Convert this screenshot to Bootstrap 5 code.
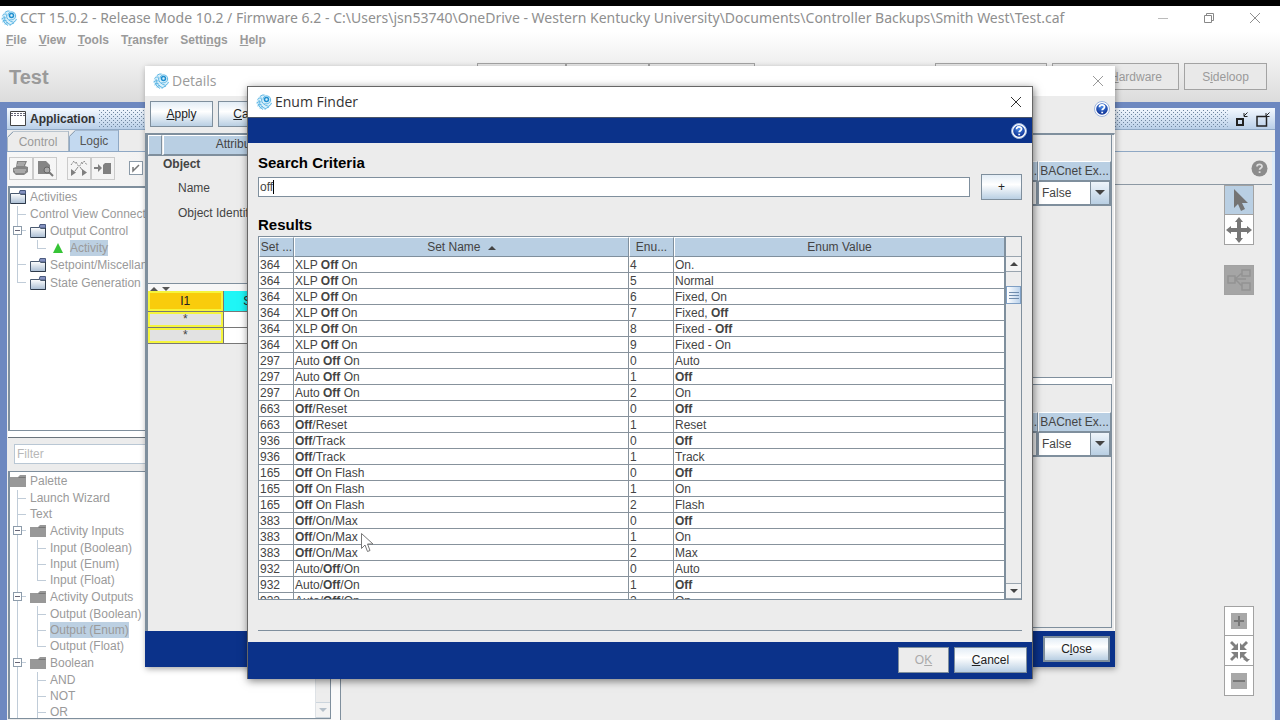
<!DOCTYPE html>
<html lang="en">
<head>
<meta charset="utf-8">
<meta name="viewport" content="width=device-width, initial-scale=1">
<title>CCT 15.0.2</title>
<link href="https://cdn.jsdelivr.net/npm/bootstrap@5.3.0/dist/css/bootstrap.min.css" rel="stylesheet">
<script src="https://cdn.jsdelivr.net/npm/bootstrap@5.3.0/dist/js/bootstrap.bundle.min.js"></script>
<style>
:root{--edge:#7f8f9d;--face:#ececec;--head:#b9cfe3;--navy:#0b328a;--dim:#9a9a9a}
body{font:12px/16px "Liberation Sans",Arial,sans-serif;color:#444;background:#ececec}
svg{display:block;flex:none}
button,input,select{font:inherit;color:inherit}
button{padding:0;border:0;background:none}
a{color:inherit;text-decoration:none}
ul{list-style:none;margin:0;padding:0}
.caption{font-family:"Open Sans","Noto Sans",sans-serif;font-size:14px;line-height:20px;white-space:nowrap}
.app-caption .caption{font-family:"Noto Sans","Open Sans",sans-serif}
.app{border-top:6px solid #000;color:var(--dim)}
.app-head{height:97px;background:linear-gradient(#fff 25px,#dcdcdc)}
.app-caption{height:24px;padding-left:1px;padding-right:19px;gap:3px;color:#8f8f8f}
.app-menu{height:20px;padding-left:6px;font-weight:bold}
.m-item{margin-right:12px}
.app-name{font-size:20px;line-height:24px;font-weight:bold}
.strip{padding:13px 13px 0 9px}
.strip-btns{gap:5px}
.view-set{margin-right:175px}
.flat-btn{border:1px solid #a3a3a3;height:27px;width:83px;background:#e9e9e9}
.desk{background:#6d88c0;padding:6px 5px 0 7px;min-height:0}
.frame{background:var(--face);min-height:0}
.frame-bar{height:22px;background:linear-gradient(#f4f9ff,#b9cfe8);border-bottom:1px solid #8fa8c4;padding:0 5px 0 3px;color:#333}
.tabs{height:22px;border-bottom:1px solid #8fa8c4}
.tab{height:20px;border:1px solid #a9b7c4;border-bottom:0;clip-path:polygon(6px 0,100% 0,100% 100%,0 100%,0 6px);background:linear-gradient(135deg,#fff 4px,#8fa2b5 4px 5px,#ececec 5px) border-box}
.tab.on{height:21px;color:#555;border-color:#8fa8c4;background:linear-gradient(135deg,#fff 4px,#8fa2b5 4px 5px,#c3d9f0 5px) border-box}
.side{width:333px;padding:0 9px 1px 1px;background:linear-gradient(90deg,var(--face) 324px,#fafafa 324px)}
.tool-row{height:34px;padding:0 0 2px 1px;background:linear-gradient(90deg,#f7f7f7,#ececec)}
.tool{width:24px;height:23px;border:1px solid #cbcbcb;display:grid;place-items:center}
.tick{appearance:none;width:14px;height:14px;border:1px solid #8b9aa8;background:#fff url("data:image/svg+xml,%3Csvg xmlns='http://www.w3.org/2000/svg' viewBox='0 0 12 12'%3E%3Cpath d='M3 5v4l6-6' fill='none' stroke='%23777' stroke-width='1.500'/%3E%3C/svg%3E");margin:0 0 0 14px}
.tree-box{background:#fff;border:1px solid var(--edge);border-width:2px 1px 1px 2px;white-space:nowrap;overflow:hidden}
.tree ul{margin-left:20px}
.tree ul>li{position:relative}
.tree ul>li::before{content:"";position:absolute;left:-13px;top:0;bottom:0;width:1px;background:#c0ccd8}
.tree ul>li:last-child::before{bottom:auto;height:8px}
.tree ul>li.more::before{bottom:0;height:auto}
.tree ul>li::after{content:"";position:absolute;left:-13px;top:8px;width:9px;height:1px;background:#c0ccd8}
.leaf{height:16px;display:flex;align-items:center;gap:4px}
.fold{height:18px;display:flex;align-items:center;gap:4px}
.twist{position:absolute;left:-17px;top:4px;width:9px;height:9px;border:1px solid #8d9cab;background:#fff;z-index:1}
.twist::after{content:"";display:block;width:5px;height:1px;margin:3px 1px;background:#667}
.picked{background:#bcd0e2}
.filter{height:20px;border:1px solid #b9c7d4;background:#fff;padding:0 2px}
.filter::placeholder{color:#b8b8b8;opacity:1}
.canvas-area{border-left:1px solid var(--edge)}
.canvas-bar{height:33px;border-bottom:1px solid #8c98a3;padding-right:4px}
.sq{width:30px;height:30px;border:1px solid #a2a2a2;background:#fff;display:grid;place-items:center}
.win{position:absolute;z-index:2;box-shadow:1px 2px 6px rgba(0,0,0,.35)}
.w-details{left:145px;right:165px;top:66px;height:601px;background:var(--face)}
.w-enum{left:247px;right:247px;top:86px;background:var(--face);border:1px solid #666;border-bottom:0;z-index:3;box-shadow:1px 2px 8px rgba(0,0,0,.5)}
.d-cap{height:30px;background:#fff;padding:0 11px 0 8px;gap:3px;color:var(--dim)}
.e-cap{height:31px;background:#fff;padding:0 10px 0 8px;gap:3px;color:#333;border-bottom:1px solid #4a5568}
.jbtn{height:26px;border:1px solid var(--edge);background:linear-gradient(#e3edf6,#fff 40%,#b9cfe3);color:#222}
.foot{background:var(--navy)}
.d-tools{height:37px;padding:5px 5px 0;gap:5px}
.d-body{border-top:2px solid var(--edge);border-left:3px solid var(--edge);border-right:1px solid #fff}
.hcell{height:20px;background:var(--head);border:1px solid;border-color:#fff var(--edge) var(--edge) #fff;text-align:center;white-space:nowrap;font-weight:normal;color:#444;overflow:hidden}
.cap-row{border-bottom:1px solid var(--edge)}
.attr{padding:0 0 0 15px;height:127px}
.attr-group{font-weight:bold;line-height:14px;padding-top:1px}
.attr-item{padding:9px 0 0 15px}
.split-bar{height:8px;background:#f7f7f7;border-top:1px solid var(--edge)}
.seq td{height:16px;padding:0;text-align:center;border:1px solid #777;border-width:0 1px 1px 0;line-height:14px}
.seq thead td{height:20px;line-height:18px;color:#222}
.seq .ylw{box-shadow:inset 0 0 0 2px #f5f53c;width:75px}
.opt-pane{border:1px solid var(--edge);border-left:0}
.ext{border-collapse:separate;border-spacing:0;width:100%;table-layout:fixed}
.ext th{padding:0;line-height:18px}
.ext td{padding:0;height:25px;border:2px solid var(--edge);border-width:1px 2px 2px 1px}
.ext th:last-child{width:73px}
.pick{appearance:none;border:0;border-radius:0;background:linear-gradient(90deg,var(--edge),var(--edge)) calc(100% - 18px) 0/1px 100% no-repeat,linear-gradient(#eef4fa,#b9cfe3) 100% 0/18px 100% no-repeat,#fff;height:22px;width:100%;padding:0 3px;display:block}
.arrow{position:absolute;right:4px;top:8px;pointer-events:none}
.e-blue{height:25px;padding-right:5px;background:var(--navy)}
.e-body{padding:10px 10px 0 10px;height:499px}
.e-label{font-size:15px;line-height:20px;font-weight:bold;color:#000}
.crit{height:20px;border:1px solid var(--edge);background:#fff;padding:0 1px;width:100%;display:block}
.caret{position:absolute;left:15px;top:3px;width:1px;height:14px;background:#000}
.grid-wrap{height:364px;border:1px solid var(--edge);overflow:hidden;margin-top:1px}
.grid-scroll{overflow:hidden;border-right:2px solid var(--edge);height:100%}
.res{width:100%;table-layout:fixed;border-collapse:separate;border-spacing:0;background:#fff;color:#444;white-space:nowrap}
.res td{height:16px;line-height:13px;padding:2px 1px 0;border:1px solid #87929c;border-width:0 1px 1px 0}
.res th{padding:1px 0 0;line-height:17px}
.res td:last-child,.res th:last-child{border-right:0}
.c1{width:35px}.c2{width:335px}.c3{width:45px}
.sbar{width:15px;flex:none;background:#ededed}
.sb-btn{height:16px;border:1px solid #9aa5af;border-width:1px 0;display:grid;place-items:center;width:100%;background:#f3f3f3}
.thumb{height:18px;border:1px solid #7f9fc4;background:linear-gradient(90deg,#fff,#bcd3ec);display:grid;place-items:center}
.e-foot{height:37px;padding:5px 5px 0;gap:5px}
.pointer{position:absolute;z-index:4;left:361px;top:533px}
</style>
</head>
<body class="overflow-hidden">
<svg width="0" height="0" class="position-absolute" aria-hidden="true">
<defs>
<linearGradient id="fg" x1="0" y1="0" x2="0" y2="1"><stop offset="0" stop-color="#fff"/><stop offset="1" stop-color="#a9bdd3"/></linearGradient>
<radialGradient id="hg" cx=".5" cy=".3" r=".7"><stop offset="0" stop-color="#4c8be8"/><stop offset="1" stop-color="#0a2c90"/></radialGradient>
<pattern id="dotty" width="4" height="4" patternUnits="userSpaceOnUse"><path d="M0 0h1v1H0zM2 2h1v1H2z" fill="#6f86a0"/></pattern>
<symbol id="logo" viewBox="0 0 16 16"><circle cx="8" cy="8" r="7.500" fill="#c9e9f8" opacity=".7"/><g fill="none" stroke="#62b8e6"><circle cx="10.500" cy="5.500" r="2" stroke="#1f8fd0" stroke-width="1.500"/><path d="M7 5.500C7 1 13.500 1 14.500 4.500 15.500 9 11 10.500 8.500 9.500M4 2.500Q6 .5 8.500 1M1.500 5.500Q3 3.500 5.500 4M.5 9q2-2 5-1M1.500 12q1-2 4-1.500M4 14.500q0-2 3-2M9 15.500q1-2 4-2.500M13 12q2-1 2.500-3M3 6q0 6 7 9M5.500 4.500q-.5 6 7.500 8M2 9.500q1 4 5 6"/></g></symbol>
<symbol id="folder" viewBox="0 0 16 14"><path d="M10 .5h5.500V4H9z" fill="#8592c0" stroke="#4a5a80"/><path d="M.5 3.500h9l1.500 1h4.500v9H.5z" fill="url(#fg)" stroke="#4a5a70"/><path d="M1 13.500h14.500V4" fill="none" stroke="#2e3a4a"/></symbol>
<symbol id="gfolder" viewBox="0 0 16 14"><path d="M0 3h8l2-2h6v12H0z" fill="#989898"/><path d="M8.500 3.500h7" stroke="#777"/></symbol>
<symbol id="help" viewBox="0 0 16 16"><circle cx="8" cy="8" r="7.500" fill="#fff" stroke="#9db4dc"/><circle cx="8" cy="8" r="5.800" fill="url(#hg)"/><path d="M5.500 6.200C5.500 3.200 10.700 3.300 10.500 6c-.1 1.700-2.300 1.700-2.300 3.300M8.200 10.700v1.600" fill="none" stroke="#fff" stroke-width="1.800"/></symbol>
<symbol id="x" viewBox="0 0 12 12"><path d="M1 1l10 10M11 1L1 11" stroke="currentColor" fill="none"/></symbol>
<symbol id="up" viewBox="0 0 8 4"><path d="M4 0l4 4H0z" fill="currentColor"/></symbol>
<symbol id="down" viewBox="0 0 10 5"><path d="M0 0h10L5 5z" fill="currentColor"/></symbol>
</defs></svg>

<div class="app d-flex flex-column vh-100">
  <header class="app-head">
    <div class="app-caption d-flex align-items-center">
      <svg width="16" height="16"><use href="#logo"/></svg>
      <span class="caption me-auto">CCT 15.0.2 - Release Mode 10.2 / Firmware 6.2 - C:\Users\jsn53740\OneDrive - Western Kentucky University\Documents\Controller Backups\Smith West\Test.caf</span>
      <div class="d-flex align-items-center" style="gap:34px">
        <button aria-label="Minimize"><svg width="12" height="12"><path d="M1 6.500h10" stroke="#bbb"/></svg></button>
        <button aria-label="Restore"><svg width="12" height="12" fill="none" stroke="#888"><path d="M1.500 3.500h7v7h-7zM3.500 3V1.500h7v7H9"/></svg></button>
        <button aria-label="Close window"><svg width="12" height="12"><use href="#x"/></svg></button>
      </div>
    </div>
    <nav class="app-menu d-flex align-items-center">
      <a class="m-item" href="#"><u>F</u>ile</a><a class="m-item" href="#"><u>V</u>iew</a><a class="m-item" href="#"><u>T</u>ools</a><a class="m-item" href="#">T<u>r</u>ansfer</a><a class="m-item" href="#">Setti<u>n</u>gs</a><a class="m-item" href="#"><u>H</u>elp</a>
    </nav>
    <div class="strip d-flex align-items-center">
      <div class="app-name me-auto">Test</div>
      <div class="strip-btns d-flex">
        <div class="view-set d-flex"><button class="flat-btn" style="width:89px" aria-label="View 1"></button><button class="flat-btn" aria-label="View 2"></button><button class="flat-btn" style="width:106px" aria-label="View 3"></button></div>
        <button class="flat-btn" style="width:112px" aria-label="Mode"></button>
        <button class="flat-btn text-end" style="width:127px;padding-right:16px"><u>H</u>ardware</button>
        <button class="flat-btn">S<u>i</u>deloop</button>
      </div>
    </div>
  </header>

  <div class="desk flex-fill d-flex">
    <main class="frame flex-fill d-flex flex-column">
      <div class="frame-bar d-flex align-items-center">
        <svg width="16" height="16"><path d="M.5.500h15v14H.5z" fill="#fff" stroke="#444"/><path d="M1 2.500h14M1 4.500h14" stroke="#667" stroke-dasharray="2 1"/></svg>
        <b class="ps-1 pe-1">Application</b>
        <svg class="flex-fill me-2" width="100" height="17"><rect width="100%" height="100%" fill="url(#dotty)"/></svg>
        <svg width="12" height="16" fill="none" stroke="#222"><path d="M1 8h6v6H1z" stroke-width="2"/><path d="M11.500 1.500L8 5M8 2v3.500h3.500"/></svg>
        <svg width="14" height="16" class="ms-2" fill="none" stroke="#222"><path d="M1 5.500h9.500V15H1z" stroke-width="1.500"/><path d="M13.500 1.500L10 5M10 2v3.500h3.500"/></svg>
      </div>
      <div class="tabs d-flex align-items-end"><button class="tab" style="width:62px">Control</button><button class="tab on" style="width:50px">Logic</button></div>
      <div class="flex-fill d-flex" style="min-height:0">
        <div class="side d-flex flex-column">
          <div class="tool-row d-flex align-items-center">
            <button class="tool" aria-label="Print"><svg width="18" height="18" fill="#858585"><path d="M5 2h10l-2 5 3 1v5l-4 3H4l-3-3V9l3-1z"/><path d="M6 4h7M5 6h7M2 11h12M3 13h10" stroke="#ccc" fill="none"/></svg></button>
            <button class="tool" aria-label="Preview"><svg width="18" height="18" fill="#858585"><path d="M2 2h8l4 4v9H2z"/><circle cx="11" cy="11" r="3" fill="#aaa" stroke="#666"/><path d="M13 13l4 4" stroke="#777" stroke-width="2"/></svg></button>
            <button class="tool" style="margin-left:10px" aria-label="Expand"><svg width="18" height="18" fill="#808080"><path d="M1 6l3-4 2 3M12 5l2-3 3 4M6 3l3 5M12 3L9 8" fill="none" stroke="#888" stroke-dasharray="2 1"/><path d="M8 8L5 12M10 8l3 4" stroke="#888"/><path d="M1 10l5 3.500L1 17zM12 10l5 3.500-5 3.500z"/></svg></button>
            <button class="tool" aria-label="Insert"><svg width="18" height="18" fill="#808080"><path d="M0 8h4V5l4 4-4 4v-3H0zM11 4h6v11H9V6z"/></svg></button>
            <input type="checkbox" class="tick" checked disabled aria-label="Show">
          </div>
          <div class="tree-box tree" style="height:247px">
            <div class="fold"><svg width="16" height="14"><use href="#folder"/></svg>Activities</div>
            <ul>
              <li><div class="leaf">Control View Connections</div></li>
              <li><span class="twist"></span><div class="fold"><svg width="16" height="14"><use href="#folder"/></svg>Output Control</div>
                <ul><li><div class="leaf"><svg width="16" height="14"><path d="M8 2l5 10H3z" fill="#36c436"/></svg><span class="picked">Activity</span></div></li></ul></li>
              <li><div class="fold"><svg width="16" height="14"><use href="#folder"/></svg>Setpoint/Miscellaneous</div></li>
              <li><div class="fold"><svg width="16" height="14"><use href="#folder"/></svg>State Generation</div></li>
            </ul>
          </div>
          <div style="height:7px" class="bg-white border-bottom border-secondary"></div>
          <div style="padding:6px;height:33px"><input class="filter w-100" placeholder="Filter" aria-label="Filter"></div>
          <div class="tree-box d-flex flex-fill" style="min-height:0;border-top-width:1px">
            <div class="tree flex-fill">
              <div class="fold"><svg width="16" height="14"><use href="#gfolder"/></svg>Palette</div>
              <ul>
                <li><div class="leaf">Launch Wizard</div></li>
                <li><div class="leaf">Text</div></li>
                <li><span class="twist"></span><div class="fold"><svg width="16" height="14"><use href="#gfolder"/></svg>Activity Inputs</div>
                  <ul><li><div class="leaf">Input (Boolean)</div></li><li><div class="leaf">Input (Enum)</div></li><li><div class="leaf">Input (Float)</div></li></ul></li>
                <li><span class="twist"></span><div class="fold"><svg width="16" height="14"><use href="#gfolder"/></svg>Activity Outputs</div>
                  <ul><li><div class="leaf">Output (Boolean)</div></li><li><div class="leaf"><span class="picked">Output (Enum)</span></div></li><li><div class="leaf">Output (Float)</div></li></ul></li>
                <li class="more"><span class="twist"></span><div class="fold"><svg width="16" height="14"><use href="#gfolder"/></svg>Boolean</div>
                  <ul><li><div class="leaf">AND</div></li><li><div class="leaf">NOT</div></li><li class="more"><div class="leaf">OR</div></li></ul></li>
              </ul>
            </div>
            <div class="sbar d-flex flex-column border-start" style="color:#b5c0ca"><button class="sb-btn mt-auto" style="border-color:#ccd5dd" aria-label="Scroll down"><svg width="8" height="4"><use href="#down"/></svg></button></div>
          </div>
        </div>
        <div class="canvas-area flex-fill d-flex flex-column" style="border-right:3px solid #dcebf8">
          <div class="canvas-bar d-flex align-items-center justify-content-end">
            <svg width="17" height="17"><circle cx="8.500" cy="8.500" r="8" fill="#8c8c8c"/><path d="M6 6.500C6 3.500 11.200 3.600 11 6.500c-.1 1.600-2.400 1.600-2.400 3.300M8.600 11.200v1.800" fill="none" stroke="#ddd" stroke-width="1.800"/></svg>
          </div>
          <div class="flex-fill d-flex flex-column align-items-end" style="padding:0 18px 24px 0">
            <button class="sq" style="background:#b9cfe3" aria-label="Select"><svg width="24" height="24"><path d="M7 1v19l4-4 3 7 4-2-3-6h6z" fill="#747474"/></svg></button>
            <button class="sq" style="border-top:0" aria-label="Pan"><svg width="26" height="26" fill="#777"><path d="M13 0l4 5h-2v6h6V9l5 4-5 4v-2h-6v6h2l-4 5-4-5h2v-6H5v2l-5-4 5-4v2h6V5H9z"/></svg></button>
            <button class="sq mb-auto" style="background:#a5a5a5;margin-top:20px" aria-label="Layout"><svg width="26" height="26" fill="none" stroke="#939393" stroke-width="1.500"><path d="M2 9h7v7H2zM16 3h8v6h-8zM16 16h8v7h-8zM9 12l7-6M9 12l7 7M10 12h10"/></svg></button>
            <button class="sq" aria-label="Zoom in"><svg width="16" height="16"><path d="M0 0h16v16H0z" fill="#a8a8a8"/><path d="M8 3v10M3 8h10" stroke="#777" stroke-width="2"/></svg></button>
            <button class="sq" style="border-top:0" aria-label="Fit"><svg width="22" height="22" fill="#808080"><path d="M4 1l4 4 2-2v7H3l3-3-4-4zM18 1l-4 4-2-2v7h7l-3-3 4-4zM2 19l4-4-3-3h7v7l-2-2-4 4zM14 17l-2 2v-7h7l-3 3 4 4-2 2zM15 19h7l-3 3z"/></svg></button>
            <button class="sq" style="border-top:0" aria-label="Zoom out"><svg width="16" height="16"><path d="M0 0h16v16H0z" fill="#a8a8a8"/><path d="M2 8h12" stroke="#777" stroke-width="2"/></svg></button>
          </div>
        </div>
      </div>
    </main>
  </div>
</div>

<section class="win w-details d-flex flex-column" aria-label="Details">
  <div class="d-cap d-flex align-items-center"><svg width="16" height="16"><use href="#logo"/></svg><span class="caption me-auto">Details</span><button aria-label="Close details"><svg width="12" height="12"><use href="#x"/></svg></button></div>
  <div class="d-tools d-flex align-items-start"><button class="jbtn" style="width:63px"><u>A</u>pply</button><button class="jbtn" style="width:68px"><u>C</u>ancel</button><svg width="16" height="16" class="ms-auto"><use href="#help"/></svg></div>
  <div class="d-body flex-fill d-flex">
    <div class="flex-fill">
      <div class="cap-row d-flex"><div class="hcell" style="width:14px"></div><div class="hcell" style="width:150px;margin-left:1px">Attribute</div></div>
      <div class="attr"><div class="attr-group">Object</div><div class="attr-item">Name</div><div class="attr-item">Object Identifier</div></div>
      <div class="split-bar d-flex align-items-end" style="color:#555;gap:4px;padding-left:2px"><svg width="8" height="4"><use href="#up"/></svg><svg width="8" height="4"><use href="#down"/></svg></div>
      <table class="seq"><thead><tr><td class="ylw" style="background:#f9cc0c">I1</td><td style="width:55px;background:#1ff6f6">S1</td></tr></thead><tbody><tr><td class="ylw" style="background:#e2e2e2">*</td><td class="bg-white"></td></tr><tr><td class="ylw" style="background:#e2e2e2">*</td><td class="bg-white"></td></tr></tbody></table>
    </div>
    <div class="d-flex flex-column" style="width:152px;padding-right:2px">
      <div class="opt-pane border-top-0" style="height:243px;padding-top:26px">
        <table class="ext"><thead><tr><th class="hcell text-end">BAC...</th><th class="hcell">BACnet Ex...</th></tr></thead><tbody><tr><td></td><td class="position-relative"><select class="pick" aria-label="BACnet exposed, input"><option>False</option></select><svg class="arrow" width="10" height="5"><use href="#down"/></svg></td></tr></tbody></table>
      </div>
      <div class="bg-white" style="height:6px"></div>
      <div class="opt-pane flex-fill" style="padding-top:27px;margin-bottom:3px">
        <table class="ext"><thead><tr><th class="hcell text-end">BAC...</th><th class="hcell">BACnet Ex...</th></tr></thead><tbody><tr><td></td><td class="position-relative"><select class="pick" aria-label="BACnet exposed, output"><option>False</option></select><svg class="arrow" width="10" height="5"><use href="#down"/></svg></td></tr></tbody></table>
      </div>
    </div>
  </div>
  <div class="foot d-flex justify-content-end" style="height:36px;padding:5px 5px 0"><button class="jbtn" style="width:67px;border-width:2px">C<u>l</u>ose</button></div>
</section>

<section class="win w-enum" aria-label="Enum Finder">
  <div class="e-cap d-flex align-items-center"><svg width="16" height="16"><use href="#logo"/></svg><span class="caption me-auto">Enum Finder</span><button aria-label="Close finder"><svg width="12" height="12"><use href="#x"/></svg></button></div>
  <div class="e-blue d-flex align-items-center justify-content-end"><svg width="16" height="16"><use href="#help"/></svg></div>
  <div class="e-body">
    <label class="e-label d-block" for="crit">Search Criteria</label>
    <div class="d-flex align-items-center" style="gap:11px;padding-top:1px"><div class="flex-fill position-relative"><input id="crit" class="crit" value="off"><span class="caret"></span></div><button class="jbtn" style="width:41px">+</button></div>
    <div class="e-label" style="padding-top:15px">Results</div>
    <div class="grid-wrap d-flex">
      <div class="grid-scroll flex-fill">
        <table class="res">
          <colgroup><col class="c1"><col class="c2"><col class="c3"><col></colgroup>
          <thead><tr><th class="hcell">Set ...</th><th class="hcell">Set Name <svg class="d-inline-block align-middle ms-1" width="8" height="4"><use href="#up"/></svg></th><th class="hcell">Enu...</th><th class="hcell">Enum Value</th></tr></thead>
          <tbody>
            <tr><td>364<td>XLP <b>Off</b> On<td>4<td>On.</tr>
            <tr><td>364<td>XLP <b>Off</b> On<td>5<td>Normal</tr>
            <tr><td>364<td>XLP <b>Off</b> On<td>6<td>Fixed, On</tr>
            <tr><td>364<td>XLP <b>Off</b> On<td>7<td>Fixed, <b>Off</b></tr>
            <tr><td>364<td>XLP <b>Off</b> On<td>8<td>Fixed - <b>Off</b></tr>
            <tr><td>364<td>XLP <b>Off</b> On<td>9<td>Fixed - On</tr>
            <tr><td>297<td>Auto <b>Off</b> On<td>0<td>Auto</tr>
            <tr><td>297<td>Auto <b>Off</b> On<td>1<td><b>Off</b></tr>
            <tr><td>297<td>Auto <b>Off</b> On<td>2<td>On</tr>
            <tr><td>663<td><b>Off</b>/Reset<td>0<td><b>Off</b></tr>
            <tr><td>663<td><b>Off</b>/Reset<td>1<td>Reset</tr>
            <tr><td>936<td><b>Off</b>/Track<td>0<td><b>Off</b></tr>
            <tr><td>936<td><b>Off</b>/Track<td>1<td>Track</tr>
            <tr><td>165<td><b>Off</b> On Flash<td>0<td><b>Off</b></tr>
            <tr><td>165<td><b>Off</b> On Flash<td>1<td>On</tr>
            <tr><td>165<td><b>Off</b> On Flash<td>2<td>Flash</tr>
            <tr><td>383<td><b>Off</b>/On/Max<td>0<td><b>Off</b></tr>
            <tr><td>383<td><b>Off</b>/On/Max<td>1<td>On</tr>
            <tr><td>383<td><b>Off</b>/On/Max<td>2<td>Max</tr>
            <tr><td>932<td>Auto/<b>Off</b>/On<td>0<td>Auto</tr>
            <tr><td>932<td>Auto/<b>Off</b>/On<td>1<td><b>Off</b></tr>
            <tr><td>932<td>Auto/<b>Off</b>/On<td>2<td>On</tr>
          </tbody>
        </table>
      </div>
      <div class="sbar d-flex flex-column" style="padding-top:19px"><button class="sb-btn" aria-label="Scroll up"><svg width="8" height="4"><use href="#up"/></svg></button><div class="thumb" style="margin-top:14px"><svg width="10" height="7"><path d="M0 .5h10M0 3.500h10M0 6.500h10" stroke="#6f8cad"/></svg></div><button class="sb-btn mt-auto" aria-label="Scroll down"><svg width="8" height="4"><use href="#down"/></svg></button></div>
    </div>
    <div style="margin-top:30px;border-top:1px solid #7f8f9d"></div>
  </div>
  <div class="foot e-foot d-flex justify-content-end"><button class="jbtn" style="width:51px;background:#ececec;color:#aaa" disabled>O<u>K</u></button><button class="jbtn" style="width:73px"><u>C</u>ancel</button></div>
</section>
<svg class="pointer" width="13" height="20"><path d="M.5.500v15l3.500-3.500 2.500 6.500 2.500-1L6.500 11H12z" fill="#fff" stroke="#777"/></svg>
</body>
</html>
